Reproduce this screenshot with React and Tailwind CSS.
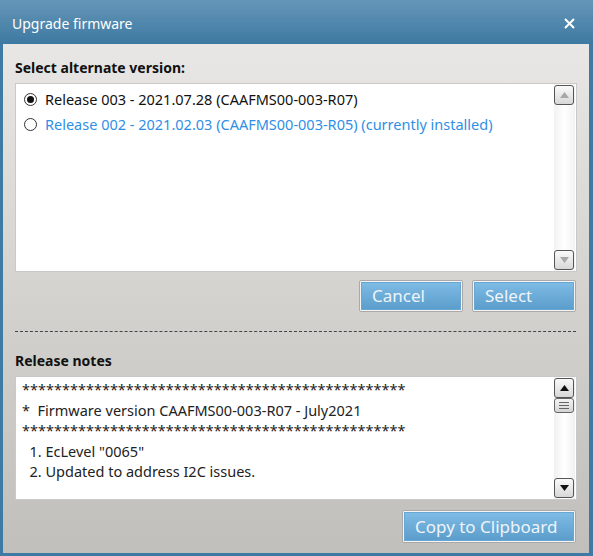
import React from "react";

const font = { fontFamily: '"Noto Sans", "Open Sans", sans-serif' };

function ScrollBtn({ dir, dark }) {
  return (
    <div className="h-[20px] w-[20px] rounded-[3px] border border-[#555] bg-gradient-to-b from-[#fafafa] to-[#d8d8d8] flex items-center justify-center">
      <svg width="9" height="6" viewBox="0 0 9 6">
        {dir === "up" ? (
          <polygon points="4.5,0 9,6 0,6" fill={dark ? "#111" : "#a8a8a8"} />
        ) : (
          <polygon points="0,0 9,0 4.5,6" fill={dark ? "#111" : "#a8a8a8"} />
        )}
      </svg>
    </div>
  );
}

function Radio({ checked }) {
  return (
    <div className="h-[13px] w-[13px] shrink-0 rounded-full border border-[#333] bg-white flex items-center justify-center">
      {checked && <div className="h-[7px] w-[7px] rounded-full bg-[#111]" />}
    </div>
  );
}

function BlueButton({ children, className }) {
  return (
    <div className={"rounded-[2px] border border-[#a9a9a9] p-[1px] bg-[#f4f4f4] " + className}>
      <div className="h-full w-full bg-gradient-to-b from-[#7ebbe5] to-[#5b9dcb] border border-[#6aa6d2] flex items-center pl-[10px] text-[17px] text-[#eef4fa]">
        {children}
      </div>
    </div>
  );
}

export default function App() {
  return (
    <div className="w-[593px] h-[556px] bg-[#3e7aa3] flex flex-col" style={font}>
      <div className="h-[44px] shrink-0 bg-gradient-to-b from-[#6596b8] to-[#3d79a2] flex items-center justify-between pl-[12px] pr-[18px] pt-[2px]">
        <span className="text-white text-[14px]">Upgrade firmware</span>
        <svg width="11" height="11" viewBox="0 0 11 11">
          <path d="M1 1 L10 10 M10 1 L1 10" stroke="white" strokeWidth="2" />
        </svg>
      </div>
      <div className="flex-1 ml-[3px] mr-[4px] mb-[3px] bg-gradient-to-b from-[#e8e7e5] via-[#d3d2ce] to-[#c0bfbb] flex flex-col px-[12px]">
        <div className="h-[39px] flex items-center pt-[8px] font-bold text-[14px] text-[#111]">Select alternate version:</div>
        <div className="h-[189px] bg-white border border-[#c9c9c9] flex">
          <div className="flex-1 pt-[3px] pl-[8px] text-[14.5px]">
            <div className="h-[25px] flex items-center gap-[8px] text-[#111]">
              <Radio checked />
              <span>Release 003 - 2021.07.28 (CAAFMS00-003-R07)</span>
            </div>
            <div className="h-[25px] flex items-center gap-[8px] text-[#2f8fe6]">
              <Radio />
              <span>Release 002 - 2021.02.03 (CAAFMS00-003-R05) (currently installed)</span>
            </div>
          </div>
          <div className="w-[21px] mr-[1px] bg-gradient-to-r from-[#f2f2f2] via-white to-[#f2f2f2] flex flex-col justify-between py-[1px]">
            <ScrollBtn dir="up" />
            <ScrollBtn dir="down" />
          </div>
        </div>
        <div className="flex justify-end gap-[9px] pt-[8px] pr-[1px]">
          <BlueButton className="w-[104px] h-[32px]">Cancel</BlueButton>
          <BlueButton className="w-[104px] h-[32px]">Select</BlueButton>
        </div>
        <div className="mt-[19px] border-t border-dashed border-[#444] mr-[1px]" />
        <div className="h-[44px] flex items-center font-bold text-[14px] text-[#111] pt-[15px] pb-[2px]">Release notes</div>
        <div className="h-[124px] bg-white border border-[#c9c9c9] flex">
          <div className="flex-1 pl-[6px] pt-[2px] text-[14.5px] text-[#222] leading-[20.5px]">
            <div className="overflow-hidden whitespace-nowrap">{"*".repeat(48)}</div>
            <div>*&nbsp; Firmware version CAAFMS00-003-R07 - July2021</div>
            <div className="overflow-hidden whitespace-nowrap">{"*".repeat(48)}</div>
            <div>&nbsp; 1. EcLevel "0065"</div>
            <div>&nbsp; 2. Updated to address I2C issues.</div>
          </div>
          <div className="w-[21px] mr-[1px] bg-gradient-to-r from-[#f0f0f0] via-white to-[#f0f0f0] flex flex-col py-[1px]">
            <ScrollBtn dir="up" dark />
            <div className="h-[15px] w-[20px] rounded-[3px] border border-[#666] bg-gradient-to-b from-[#f4f4f4] to-[#d4d4d4] flex flex-col items-center justify-center gap-[2px]">
              <div className="w-[10px] h-[1px] bg-[#666]" />
              <div className="w-[10px] h-[1px] bg-[#666]" />
              <div className="w-[10px] h-[1px] bg-[#666]" />
            </div>
            <div className="flex-1" />
            <ScrollBtn dir="down" dark />
          </div>
        </div>
        <div className="flex justify-end pt-[10px] pr-[1px]">
          <BlueButton className="w-[174px] h-[33px]">Copy to Clipboard</BlueButton>
        </div>
      </div>
    </div>
  );
}
